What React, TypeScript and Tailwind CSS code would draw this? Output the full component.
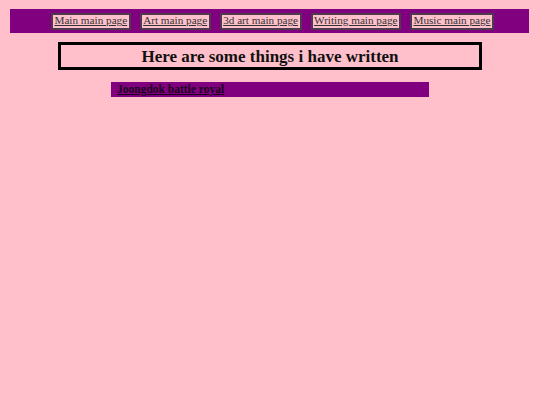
import React from "react";

const links = ["Main main page", "Art main page", "3d art main page", "Writing main page", "Music main page"];

export default function App() {
  return (
    <div className="min-h-[405px] w-[540px] bg-[#ffc0cb] pt-[9px]" style={{ fontFamily: '"Liberation Serif", "Times New Roman", serif' }}>
      <div className="ml-[10px] flex h-[24px] w-[519px] items-center justify-center gap-[9px] bg-[#800080] pl-[6px]">
        {links.map((l) => (
          <div key={l} className="flex h-[17px] items-center border-2 border-[#4d3a4d] bg-[#ffc0cb] px-[1.5px]">
            <span className="text-[11.2px] leading-none text-[#333] underline">{l}</span>
          </div>
        ))}
      </div>
      <div className="mx-auto mt-[9px] flex h-[28px] w-[424px] items-center justify-center border-[3px] border-black pt-[1px]">
        <span className="text-[17px] font-bold leading-none text-[#111]">Here are some things i have written</span>
      </div>
      <div className="ml-[111px] mt-[12px] flex h-[15px] w-[318px] items-center bg-[#800080] pl-[6px]">
        <span className="text-[11.5px] font-bold leading-none text-[#1a001a] underline">Joongdok battle royal</span>
      </div>
    </div>
  );
}
